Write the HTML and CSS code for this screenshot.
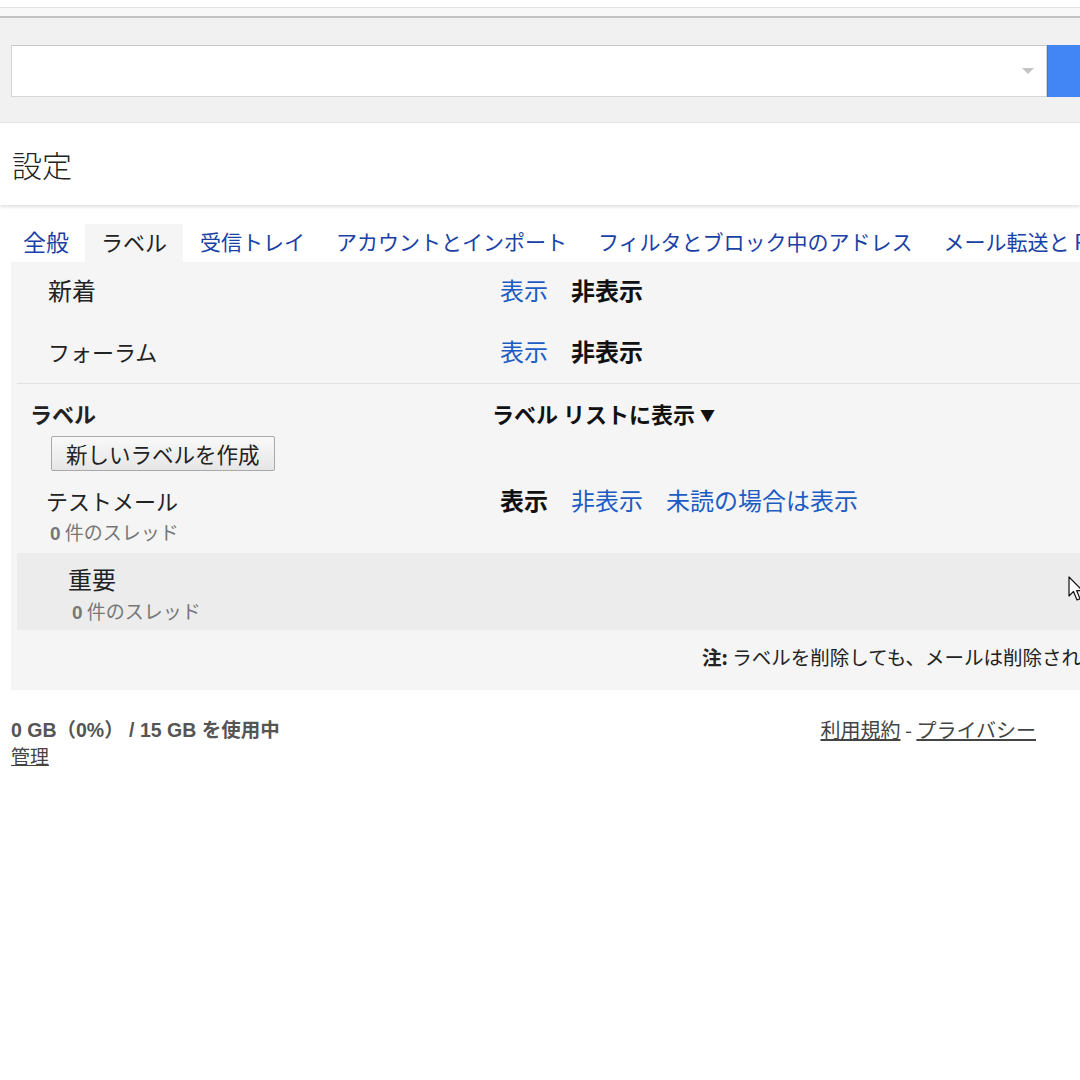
FILE: index.html
```html
<!DOCTYPE html>
<html lang="ja">
<head>
<meta charset="utf-8">
<title>設定</title>
<link rel="stylesheet" href="styles.css">
</head>
<body>
<div class="topstrip"></div>
<div class="header">
  <div class="searchrow">
    <div class="searchbox"><span class="dd"></span></div>
    <div class="searchbtn"></div>
  </div>
</div>
<div class="titlebar"><h1 class="title">設定</h1></div>
<nav class="tabs">
  <a class="tab k">全般</a>
  <a class="tab active">ラベル</a>
  <a class="tab">受信トレイ</a>
  <a class="tab">アカウントとインポート</a>
  <a class="tab">フィルタとブロック中のアドレス</a>
  <a class="tab">メール転送と POP/IMAP</a>
</nav>
<main class="panel">
  <div class="sysrow first">
    <div class="name k">新着</div>
    <div class="acts"><a class="link">表示</a><b class="cur">非表示</b></div>
  </div>
  <div class="sysrow second">
    <div class="name">フォーラム</div>
    <div class="acts"><a class="link">表示</a><b class="cur">非表示</b></div>
  </div>
  <div class="labelhead">
    <div class="lh-left">
      <div class="lh-title">ラベル</div>
      <button class="newbtn">新しいラベルを作成</button>
    </div>
    <div class="lh-right">ラベル リストに表示 <span class="tri">▼</span></div>
  </div>
  <div class="labelrow">
    <div class="lname">
      <div class="ltitle">テストメール</div>
      <div class="lcount"><b>0</b> 件のスレッド</div>
    </div>
    <div class="acts"><b class="cur">表示</b><a class="link">非表示</a><a class="link">未読の場合は表示</a></div>
  </div>
  <div class="labelrow hover">
    <div class="lname sub">
      <div class="ltitle k">重要</div>
      <div class="lcount"><b>0</b> 件のスレッド</div>
    </div>
    <svg class="cursor" width="16" height="26" viewBox="0 0 16 26"><path d="M1 1 L1 20 L5.5 15.5 L9 24 L12 22.8 L8.6 14.6 L14.5 14.6 Z" fill="#fff" stroke="#111" stroke-width="1.2" stroke-linejoin="round"/></svg>
  </div>
  <div class="note"><b>注:</b> ラベルを削除しても、メールは削除されません。</div>
</main>
<footer class="footer">
  <div class="quota">
    <div class="usage">0 GB（0%） / 15 GB を使用中</div>
    <a class="manage">管理</a>
  </div>
  <div class="legal"><a>利用規約</a> - <a>プライバシー</a></div>
</footer>
</body>
</html>
```
FILE: styles.css
```css
html, body {
  margin: 0;
  padding: 0;
  background: #fff;
}
body {
  width: 1080px;
  height: 1080px;
  overflow: hidden;
  font-family: "Liberation Sans", "Noto Sans CJK JP", sans-serif;
  color: #222;
  font-size: 22px;
}
a { cursor: pointer; }

.topstrip {
  height: 7px;
  background: #fff;
  border-bottom: 1px solid #e2e2e2;
}
.header {
  background: #f1f1f1;
  border-top: 8px solid #f8f8f8;
  box-shadow: inset 0 2px 0 #c4c4c4;
  height: 104px;
  padding-top: 2px;
  box-sizing: content-box;
  border-bottom: 1px solid #e6e6e6;
}
.searchrow {
  display: flex;
  padding: 27px 0 0 11px;
}
.searchbox {
  flex: none;
  width: 1034px;
  height: 50px;
  background: #fff;
  border: 1px solid #d6d6d6;
  border-top-color: #c9c9c9;
  position: relative;
}
.dd {
  position: absolute;
  right: 12px;
  top: 22px;
  width: 0;
  height: 0;
  border-left: 6px solid transparent;
  border-right: 6px solid transparent;
  border-top: 6px solid #c4c4c4;
}
.searchbtn {
  width: 60px;
  height: 52px;
  background: #4285f4;
  border-left: 1px solid #3a76d8;
  flex: none;
}
.titlebar {
  height: 82px;
  background: #fff;
  box-shadow: 0 2px 3px rgba(0,0,0,0.12);
  position: relative;
  display: flex;
  align-items: center;
}
.title {
  margin: 0 0 0 12px;
  font-family: "Noto Sans CJK JP", sans-serif;
  font-weight: 300;
  font-size: 30px;
  line-height: 40px;
  color: #222;
}
.tabs {
  display: flex;
  padding: 19px 0 0 9px;
  height: 38px;
  white-space: nowrap;
}
.tab {
  font-family: "Noto Sans CJK JP", sans-serif;
  color: #1a3fa6;
  font-size: 21px;
  line-height: 34px;
  padding: 0 14px 4px;
  margin-right: 3px;
}
.tab.k { font-size: 23px; }
.tab.active {
  background: #f5f5f5;
  color: #222;
  font-size: 22px;
  padding: 0 16px 4px;
  margin-left: -1px;
}
.panel {
  margin-left: 11px;
  background: #f5f5f5;
  padding: 0 0 0 6px;
  height: 428px;
  font-family: "Noto Sans CJK JP", sans-serif;
  white-space: nowrap;
}
.sysrow {
  display: grid;
  grid-template-columns: 483px 1fr;
  align-items: center;
  box-sizing: border-box;
}
.sysrow.first {
  height: 62px;
  padding-bottom: 6px;
}
.sysrow.second {
  height: 60px;
  padding-bottom: 5px;
  border-bottom: 1px solid #e2e2e2;
}
.name {
  padding-left: 31px;
  line-height: 30px;
}
.k { font-size: 24px; }
.acts {
  display: flex;
  gap: 23px;
  font-size: 24px;
  line-height: 32px;
}
.link { color: #1c5cc4; }
.cur { font-weight: 700; color: #111; }
.labelhead {
  display: grid;
  grid-template-columns: 475px 1fr;
  padding-top: 14px;
}
.lh-left {
  padding-left: 13px;
}
.lh-title {
  font-weight: 700;
  line-height: 30px;
}
.lh-right {
  font-weight: 700;
  line-height: 30px;
  color: #111;
}
.tri { font-size: 15px; vertical-align: 2px; }
.newbtn {
  margin: 8px 0 0 21px;
  height: 35px;
  padding: 0 14px;
  font-family: "Noto Sans CJK JP", sans-serif;
  font-size: 21.5px;
  line-height: 31px;
  color: #222;
  background: linear-gradient(#f9f9f9, #e6e6e6);
  border: 1px solid #a9a9a9;
  border-radius: 2px;
  display: block;
}
.labelrow {
  display: grid;
  grid-template-columns: 483px 1fr;
  height: 82px;
  padding-top: 13px;
  box-sizing: border-box;
  position: relative;
}
.lname { padding-left: 29px; }
.lname.sub { padding-left: 51px; }
.ltitle { line-height: 32px; }
.lcount {
  font-size: 19px;
  color: #777;
  line-height: 32px;
  margin-left: 4px;
}
.lcount b { color: #777; font-family: "Liberation Sans", sans-serif; }
.labelrow.hover {
  background: #ececec;
  height: 77px;
  padding-top: 10px;
}
.cursor {
  position: absolute;
  left: 1051px;
  top: 23px;
}
.note {
  padding-left: 685px;
  font-size: 19.5px;
  line-height: 28px;
  margin-top: 13px;
  color: #222;
}
.note b { font-weight: 700; }
.footer {
  display: flex;
  justify-content: space-between;
  padding: 27px 44px 0 11px;
  font-size: 19.5px;
  color: #555;
}
.usage {
  font-weight: 700;
  color: #555;
  line-height: 26px;
}
.manage {
  color: #444;
  text-decoration: underline;
  line-height: 26px;
  font-family: "Noto Sans CJK JP", sans-serif;
  font-size: 19px;
}
.legal {
  line-height: 26px;
  font-size: 20px;
  color: #444;
  font-family: "Noto Sans CJK JP", sans-serif;
}
.legal a { text-decoration: underline; color: #444; }
```
